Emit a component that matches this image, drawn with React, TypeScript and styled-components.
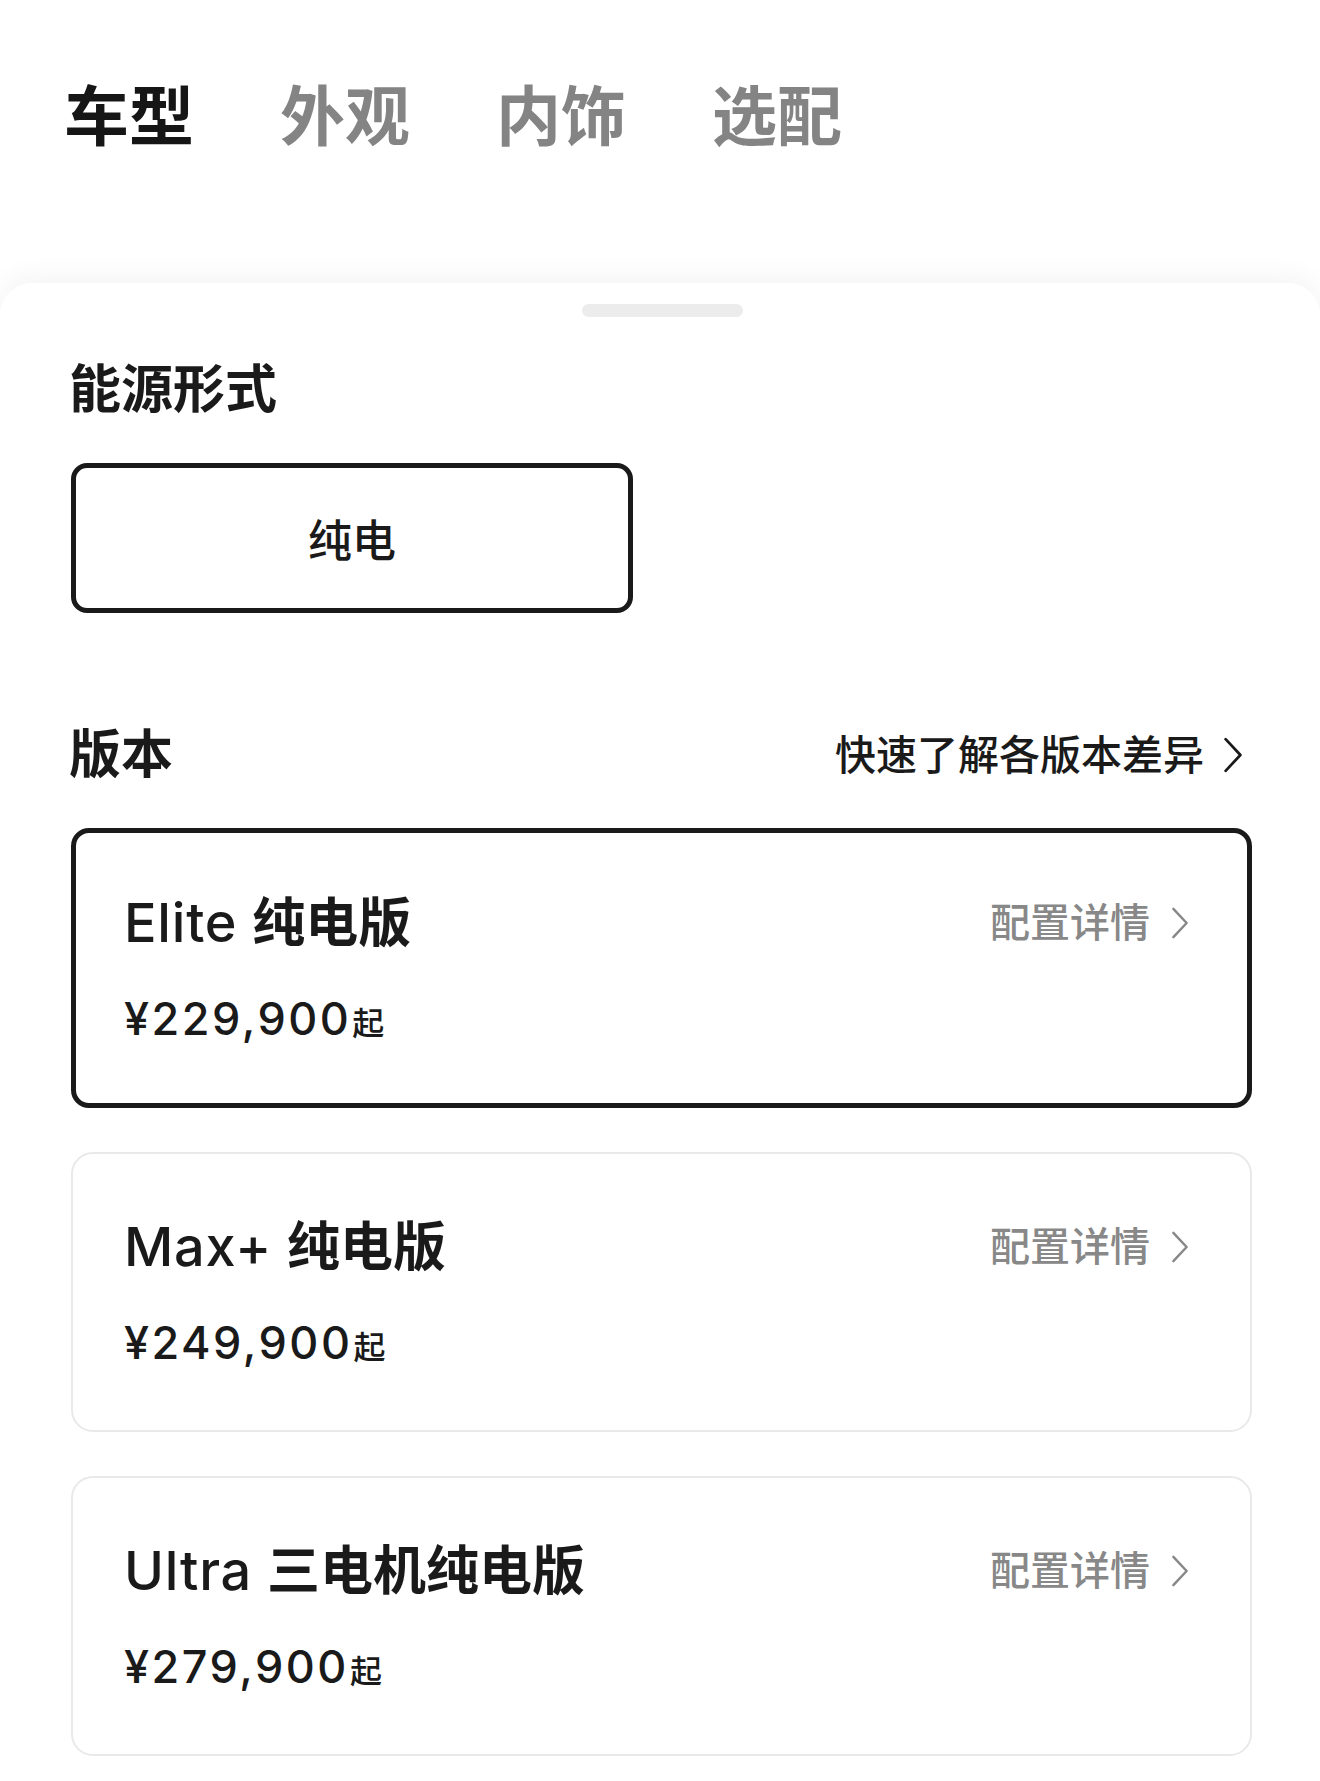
import styled, { createGlobalStyle } from 'styled-components';

const GlobalStyle = createGlobalStyle`
  * {
    box-sizing: border-box;
  }

  body {
    margin: 0;
    background-color: #ffffff;
    font-family: Inter, 'Noto Sans CJK SC', sans-serif;
    color: #1a1a1a;
  }
`;

const tabs = ['车型', '外观', '内饰', '选配'];

const versions = [
  { model: 'Elite', name: '纯电版', price: '¥229,900', selected: true },
  { model: 'Max+', name: '纯电版', price: '¥249,900', selected: false },
  { model: 'Ultra', name: '三电机纯电版', price: '¥279,900', selected: false },
];

function Chevron({ tone }: { tone: 'dark' | 'gray' }) {
  return (
    <ChevronIcon viewBox='0 0 20 36' $tone={tone}>
      <polyline points='3,3 17,18 3,33' />
    </ChevronIcon>
  );
}

export default function App() {
  return (
    <>
      <GlobalStyle />
      <Page>
        <TabBar>
          {tabs.map((tab, i) => (
            <Tab key={tab} $active={i === 0}>
              {tab}
            </Tab>
          ))}
        </TabBar>
        <Sheet>
          <Handle />
          <SectionTitle>能源形式</SectionTitle>
          <EnergyOption $selected>纯电</EnergyOption>
          <SectionHeader>
            <SectionTitle>版本</SectionTitle>
            <QuickLink>
              快速了解各版本差异
              <Chevron tone='dark' />
            </QuickLink>
          </SectionHeader>
          <VersionList>
            {versions.map((v) => (
              <VersionCard key={v.model} $selected={v.selected}>
                <CardTop>
                  <VersionName>
                    <span className='model'>{v.model}</span>
                    {v.name}
                  </VersionName>
                  <DetailLink>
                    配置详情
                    <Chevron tone='gray' />
                  </DetailLink>
                </CardTop>
                <Price>
                  {v.price}
                  <span className='from'>起</span>
                </Price>
              </VersionCard>
            ))}
          </VersionList>
        </Sheet>
      </Page>
    </>
  );
}

const Page = styled.div`
  display: flex;
  flex-direction: column;
  min-height: 100vh;
  overflow: hidden;
`;

const TabBar = styled.nav`
  display: flex;
  gap: 86px;
  height: 283px;
  padding: 84px 0 0 64px;
`;

const Tab = styled.div<{ $active: boolean }>`
  font-size: 65px;
  line-height: 65px;
  font-weight: 700;
  color: ${(p) => (p.$active ? '#161616' : '#848484')};
`;

const Sheet = styled.section`
  flex: 1;
  display: flex;
  flex-direction: column;
  padding: 0 68px 0 71px;
  border-radius: 32px 32px 0 0;
  background-color: #ffffff;
  box-shadow: 0 -8px 26px rgba(0, 0, 0, 0.045);
`;

const Handle = styled.div`
  align-self: center;
  width: 161px;
  height: 13px;
  margin: 21px 0 0 2px;
  border-radius: 7px;
  background-color: #ececec;
`;

const SectionTitle = styled.h2`
  margin: 47px 0 0 -2px;
  font-size: 52px;
  line-height: 52px;
  font-weight: 700;
  color: #1a1a1a;
`;

const EnergyOption = styled.div<{ $selected: boolean }>`
  display: flex;
  justify-content: center;
  align-items: center;
  width: 562px;
  height: 150px;
  margin-top: 47px;
  font-size: 44px;
  font-weight: 500;
  border-radius: 16px;
  border: 5px solid ${(p) => (p.$selected ? '#1a1a1a' : '#ebebeb')};
`;

const SectionHeader = styled.div`
  display: flex;
  justify-content: space-between;
  align-items: center;
  margin-top: 116px;

  > h2 {
    margin-top: 0;
  }
`;

const QuickLink = styled.div`
  display: flex;
  align-items: center;
  gap: 18px;
  padding-right: 8px;
  font-size: 41px;
  line-height: 52px;
  font-weight: 500;
  color: #1a1a1a;
`;

const ChevronIcon = styled.svg<{ $tone: 'dark' | 'gray' }>`
  width: ${(p) => (p.$tone === 'dark' ? '22px' : '20px')};
  height: ${(p) => (p.$tone === 'dark' ? '38px' : '34px')};
  fill: none;
  stroke: ${(p) => (p.$tone === 'dark' ? '#1a1a1a' : '#888888')};
  stroke-width: 2.6;
  stroke-linecap: round;
  stroke-linejoin: round;
`;

const VersionList = styled.div`
  display: flex;
  flex-direction: column;
  gap: 44px;
  margin-top: 47px;
`;

const VersionCard = styled.div<{ $selected: boolean }>`
  display: flex;
  flex-direction: column;
  justify-content: center;
  gap: 48px;
  height: 280px;
  padding: 6px ${(p) => (p.$selected ? 57 : 60)}px 0 ${(p) => (p.$selected ? 48 : 51)}px;
  border-radius: ${(p) => (p.$selected ? 18 : 22)}px;
  border: ${(p) => (p.$selected ? '5px solid #1a1a1a' : '2px solid #e9e9e9')};
  background-color: #ffffff;
`;

const CardTop = styled.div`
  display: flex;
  justify-content: space-between;
  align-items: center;
`;

const VersionName = styled.div`
  font-size: 53px;
  line-height: 52px;
  font-weight: 700;
  color: #1a1a1a;

  > .model {
    font-size: 54px;
    font-weight: 500;
    letter-spacing: 0.8px;
    margin-right: 15px;
  }
`;

const DetailLink = styled.div`
  display: flex;
  align-items: center;
  gap: 20px;
  font-size: 40px;
  line-height: 52px;
  font-weight: 500;
  color: #888888;
`;

const Price = styled.div`
  font-size: 45px;
  line-height: 44px;
  font-weight: 500;
  letter-spacing: 2.5px;
  color: #1a1a1a;

  > .from {
    font-size: 32px;
    letter-spacing: 0;
    margin-left: 1px;
  }
`;
